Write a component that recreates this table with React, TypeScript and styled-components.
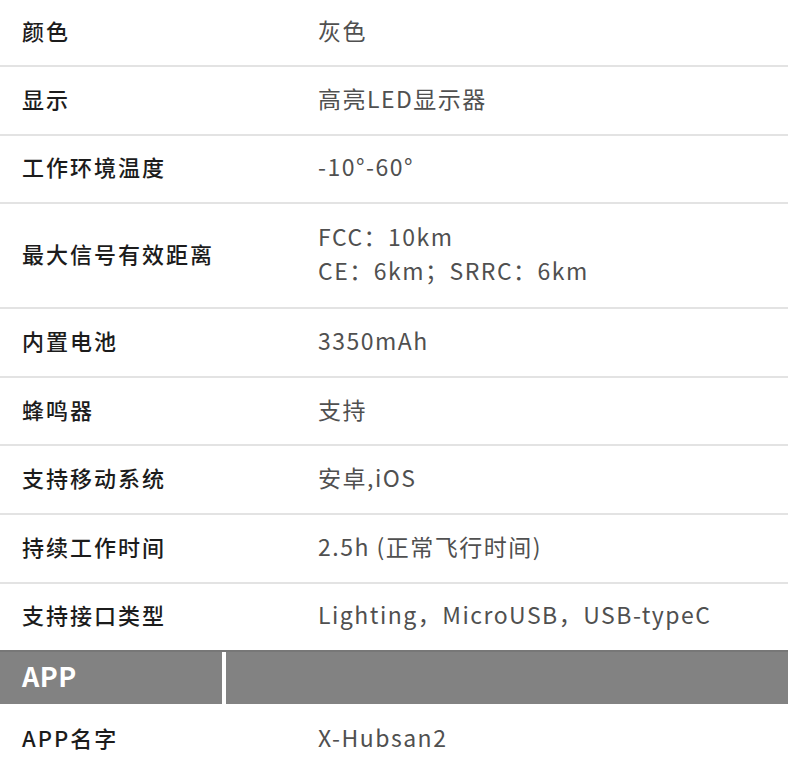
import React from "react";
import styled, { createGlobalStyle } from "styled-components";

const Global = createGlobalStyle`
  html, body { margin: 0; padding: 0; background: #fff; }
  body { font-family: "Noto Sans CJK SC", "Noto Sans", sans-serif; }
`;

const Table = styled.div`
  width: 788px;
  display: flex;
  flex-direction: column;
`;

const Row = styled.div<{ $h: number }>`
  box-sizing: border-box;
  height: ${(p) => p.$h}px;
  display: flex;
  align-items: center;
  padding-bottom: 5px;
  border-bottom: 2px solid #e3e3e3;
`;

const Label = styled.div`
  width: 296px;
  padding-left: 22px;
  font-size: 22px;
  font-weight: 500;
  color: #1c1c1c;
  letter-spacing: 2px;
`;

const Value = styled.div`
  flex: 1;
  font-size: 23px;
  line-height: 34px;
  color: #505050;
  letter-spacing: 1.5px;
`;

const Header = styled.div`
  height: 52px;
  display: flex;
  gap: 4px;
  margin-top: -2px;
  border-top: 2px solid #777;
`;

const HeaderCell = styled.div<{ $w?: number }>`
  background: #828282;
  ${(p) => (p.$w ? `width: ${p.$w}px;` : "flex: 1;")}
  display: flex;
  align-items: center;
  padding-left: 22px;
  padding-bottom: 5px;
  box-sizing: border-box;
  color: #fff;
  font-size: 27px;
  font-weight: 700;
  letter-spacing: 0.5px;
`;

const LastRow = styled.div`
  box-sizing: border-box;
  height: 68px;
  display: flex;
  align-items: center;
  padding-bottom: 3px;
`;

type Item = { k: string; v: React.ReactNode; h?: number };

const items: Item[] = [
  { k: "颜色", v: "灰色", h: 67 },
  { k: "显示", v: "高亮LED显示器" },
  { k: "工作环境温度", v: "-10°-60°" },
  {
    k: "最大信号有效距离",
    v: (
      <>
        FCC：10km
        <br />
        CE：6km；SRRC：6km
      </>
    ),
    h: 105,
  },
  { k: "内置电池", v: "3350mAh" },
  { k: "蜂鸣器", v: "支持" },
  { k: "支持移动系统", v: "安卓,iOS" },
  { k: "持续工作时间", v: "2.5h (正常飞行时间)" },
  { k: "支持接口类型", v: "Lighting，MicroUSB，USB-typeC" },
];

export default function App() {
  return (
    <>
      <Global />
      <Table>
        {items.map((it) => (
          <Row key={it.k} $h={it.h ?? 68.6}>
            <Label>{it.k}</Label>
            <Value>{it.v}</Value>
          </Row>
        ))}
        <Header>
          <HeaderCell $w={222}>APP</HeaderCell>
          <HeaderCell />
        </Header>
        <LastRow>
          <Label>APP名字</Label>
          <Value>X-Hubsan2</Value>
        </LastRow>
      </Table>
    </>
  );
}
